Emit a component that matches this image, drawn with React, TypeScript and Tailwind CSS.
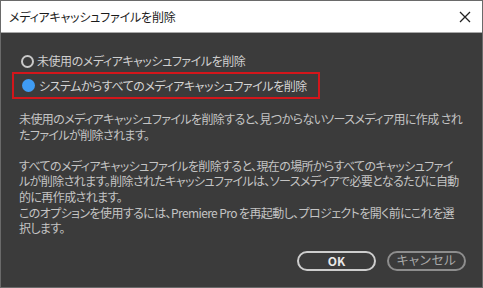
import React, { useState } from "react";

const FONT = "[font-family:'Noto_Sans_CJK_JP','Noto_Sans',sans-serif] [font-feature-settings:'palt']";

const Radio = ({ checked }: { checked: boolean }) => (
  <span
    className={`inline-block w-[13px] h-[13px] rounded-full shrink-0 ${
      checked ? "bg-[#3f9cf4]" : "border-2 border-[#c9c9c9]"
    }`}
  />
);

export default function App() {
  const [mode, setMode] = useState<"unused" | "all">("all");

  return (
    <div className={`w-[483px] h-[288px] flex flex-col bg-[#3b3b3b] border border-[#6a6a6a] overflow-hidden ${FONT}`}>
      {/* タイトルバー */}
      <div className="h-[32px] shrink-0 bg-white border-b border-[#a8a8a8] flex items-center justify-between pl-[8px] pr-[10px]">
        <span className="text-[12px] text-[#1b1b1b] tracking-[-0.2px]">メディアキャッシュファイルを削除</span>
        <svg width="12" height="12" viewBox="0 0 12 12" className="mr-[1px]">
          <path d="M1 1 L11 11 M11 1 L1 11" stroke="#222" strokeWidth="1.3" fill="none" />
        </svg>
      </div>

      <div className="flex flex-col pt-[20px] text-[12px] tracking-[-0.45px]">
        <button
          type="button"
          onClick={() => setMode("unused")}
          className="flex items-center gap-[3px] h-[16px] ml-[20px] text-[#cfcfcf] text-left"
        >
          <Radio checked={mode === "unused"} />
          <span>未使用のメディアキャッシュファイルを削除</span>
        </button>

        <div className="mt-[3px] ml-[11px] w-[308px] h-[27px] border-2 border-[#d3161b] flex items-center">
          <button
            type="button"
            onClick={() => setMode("all")}
            className="flex items-center gap-[4px] ml-[8px] text-[#d4d4d4] text-left"
          >
            <Radio checked={mode === "all"} />
            <span>システムからすべてのメディアキャッシュファイルを削除</span>
          </button>
        </div>

        <div className="mt-[12px] ml-[18px] text-[#c4c4c4] leading-[15.6px] whitespace-nowrap tracking-[-0.6px]">
          <p>未使用のメディアキャッシュファイルを削除すると、見つからないソースメディア用に作成 され</p>
          <p>たファイルが削除されます。</p>
          <p>&nbsp;</p>
          <p>すべてのメディアキャッシュファイルを削除すると、現在の場所からすべてのキャッシュファイ</p>
          <p>ルが削除されます。削除されたキャッシュファイルは、ソースメディアで必要となるたびに自動</p>
          <p>的に再作成されます。</p>
          <p>このオプションを使用するには、Premiere Pro を再起動し、プロジェクトを開く前にこれを選</p>
          <p>択します。</p>
        </div>

        <div className="flex justify-end gap-[11px] mt-[15px] pr-[16px] tracking-normal">
          <button
            type="button"
            className="w-[79px] h-[20px] rounded-full border-2 border-[#cdcdcd] text-[12px] font-semibold text-[#e8e8e8] flex items-center justify-center"
          >
            OK
          </button>
          <button
            type="button"
            className="w-[79px] h-[20px] rounded-full border-2 border-[#8d8d8d] text-[12.5px] tracking-[0.6px] text-[#a9a9a9] flex items-center justify-center"
          >
            キャンセル
          </button>
        </div>
      </div>
    </div>
  );
}
